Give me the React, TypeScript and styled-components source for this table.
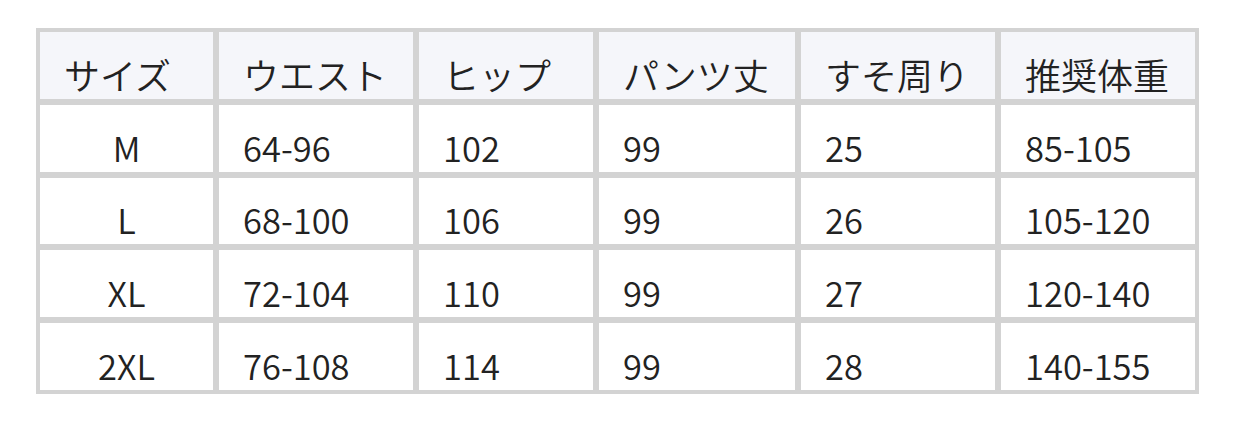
import React from "react";
import styled, { createGlobalStyle } from "styled-components";

const Global = createGlobalStyle`
  html, body { margin: 0; padding: 0; background: #ffffff; }
  body { font-family: "Noto Sans CJK JP", "Noto Sans", sans-serif; color: #222222; }
`;

const Page = styled.div`
  padding: 28px 0 0 36px;
`;

const Grid = styled.div`
  display: grid;
  width: fit-content;
  grid-template-columns: 173px 194px 174px 196px 194px 194px;
  grid-auto-rows: 66.8px;
  gap: 6px;
  padding: 4px;
  background: #d3d3d3;
`;

const Cell = styled.div<{ $head?: boolean; $center?: boolean }>`
  display: flex;
  align-items: flex-end;
  justify-content: ${(p) => (p.$center ? "center" : "flex-start")};
  padding: 0 0 ${(p) => (p.$head ? "2px" : "2px")} ${(p) => (p.$center ? "0" : "24px")};
  background: ${(p) => (p.$head ? "#f5f6fa" : "#ffffff")};
  font-size: ${(p) => (p.$head ? "36px" : "34.5px")};
  font-weight: 350;
  line-height: 46px;
  color: #222222;
  white-space: nowrap;
`;

const headers = ["サイズ", "ウエスト", "ヒップ", "パンツ丈", "すそ周り", "推奨体重"];
const rows = [
  ["M", "64-96", "102", "99", "25", "85-105"],
  ["L", "68-100", "106", "99", "26", "105-120"],
  ["XL", "72-104", "110", "99", "27", "120-140"],
  ["2XL", "76-108", "114", "99", "28", "140-155"],
];

export default function App() {
  return (
    <>
      <Global />
      <Page>
        <Grid>
          {headers.map((h) => (
            <Cell key={h} $head>
              {h}
            </Cell>
          ))}
          {rows.map((r) =>
            r.map((v, i) => (
              <Cell key={r[0] + i} $center={i === 0}>
                {v}
              </Cell>
            ))
          )}
        </Grid>
      </Page>
    </>
  );
}
